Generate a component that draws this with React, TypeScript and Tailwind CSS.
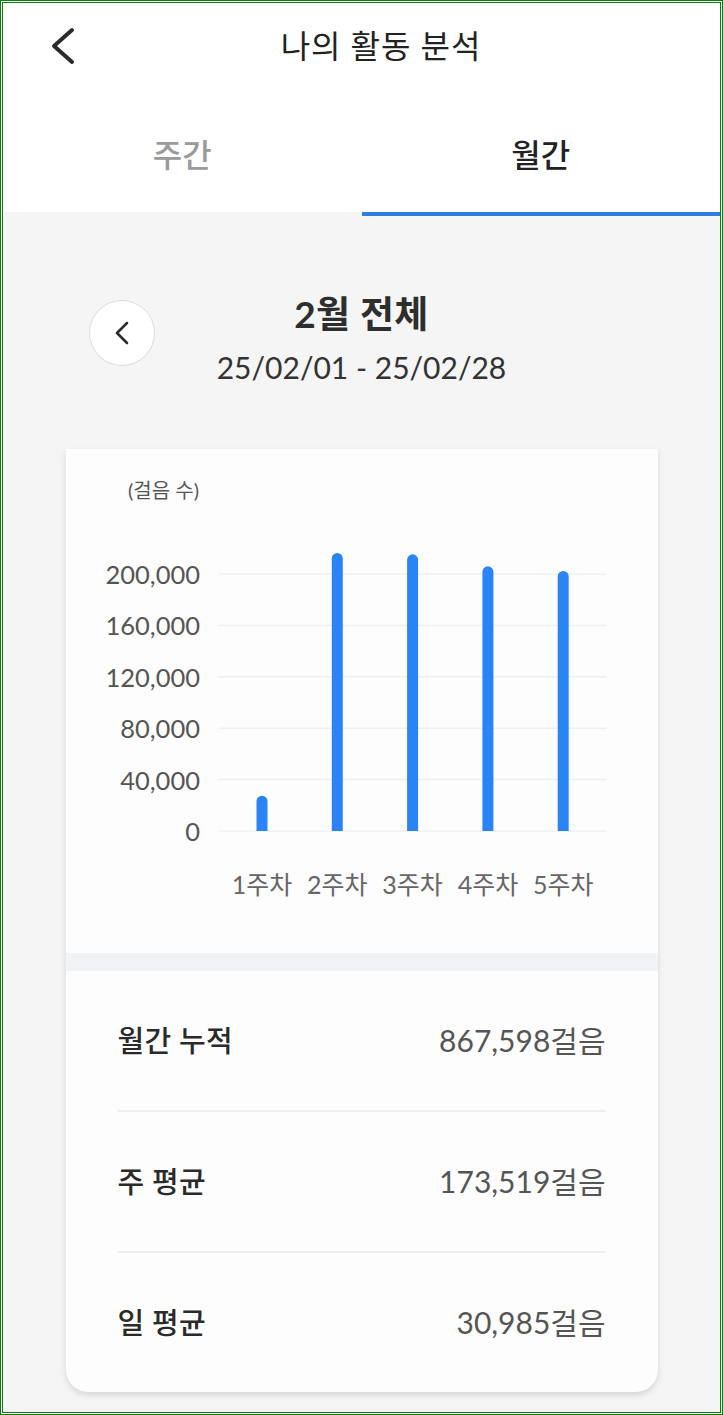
import { useState } from 'react';

const weeks = [
  { label: '1주차', steps: 27500 },
  { label: '2주차', steps: 216400 },
  { label: '3주차', steps: 215300 },
  { label: '4주차', steps: 206000 },
  { label: '5주차', steps: 202398 },
];

const ticks = [0, 40000, 80000, 120000, 160000, 200000];

const stats = [
  { label: '월간 누적', value: '867,598걸음' },
  { label: '주 평균', value: '173,519걸음' },
  { label: '일 평균', value: '30,985걸음' },
];

const Chevron = ({ className }: { className?: string }) => (
  <svg viewBox="0 0 26 38" className={className} fill="none">
    <path
      d="M22 3 L4 19 L22 35"
      stroke="#2b2b2b"
      strokeWidth={4}
      strokeLinecap="round"
      strokeLinejoin="round"
    />
  </svg>
);

const StepChart = () => {
  const base = 382;
  const step = 51.4;
  const scale = 257 / 200000;
  return (
    <svg width={592} height={504} className="block">
      <text x={62} y={41} fontSize={20} fill="#555" dominantBaseline="central">
        (걸음 수)
      </text>
      {ticks.map((t, i) => {
        const y = base - i * step;
        return (
          <g key={t}>
            <line x1={153} x2={540} y1={y} y2={y} stroke="#eef0f4" strokeWidth={1.5} />
            <text
              x={134}
              y={y}
              textAnchor="end"
              dominantBaseline="central"
              fontSize={25.5}
              fill="#555"
            >
              {t.toLocaleString('en-US')}
            </text>
          </g>
        );
      })}
      {weeks.map((w, i) => {
        const cx = 196 + i * 75.3;
        const top = base - w.steps * scale;
        return (
          <g key={w.label}>
            <path
              d={`M${cx - 5.5} ${base} V${top + 5.5} A5.5 5.5 0 0 1 ${cx + 5.5} ${top + 5.5} V${base} Z`}
              fill="#2b84f5"
            />
            <text
              x={cx}
              y={435}
              textAnchor="middle"
              dominantBaseline="central"
              fontSize={25}
              fill="#666"
            >
              {w.label}
            </text>
          </g>
        );
      })}
    </svg>
  );
};

const App = () => {
  const [tab, setTab] = useState<'week' | 'month'>('month');

  return (
    <div className="w-[723px] h-[1415px] border border-[#0b7d0b] p-px bg-white font-['Lato','Noto_Sans_CJK_KR',sans-serif]">
      <div className="h-full border border-[#0b7d0b] bg-[#f5f5f5] flex flex-col overflow-hidden">
        {/* header */}
        <div className="h-[86px] bg-white flex items-center shrink-0">
          <button className="ml-[45px] w-[30px] h-[40px] flex items-center justify-center">
            <Chevron className="w-[26px] h-[38px]" />
          </button>
          <div className="flex-1 text-center pr-[40px] pl-[4px] text-[32px] text-[#222] tracking-[0.03em]">
            나의 활동 분석
          </div>
        </div>

        {/* tabs */}
        <div className="h-[127px] bg-white grid grid-cols-2 shrink-0">
          <div
            onClick={() => setTab('week')}
            className={`flex items-center justify-center pt-[8px] text-[32px] font-medium border-b-4 ${
              tab === 'week'
                ? 'text-[#222] border-[#2f7de1]'
                : 'text-[#9a9a9a] border-[#f5f5f5]'
            }`}
          >
            주간
          </div>
          <div
            onClick={() => setTab('month')}
            className={`flex items-center justify-center pt-[8px] text-[32px] font-medium border-b-4 ${
              tab === 'month'
                ? 'text-[#222] border-[#2f7de1]'
                : 'text-[#9a9a9a] border-[#f5f5f5]'
            }`}
          >
            월간
          </div>
        </div>

        {/* period nav */}
        <div className="h-[233px] grid grid-cols-[1fr_auto_1fr] shrink-0">
          <div className="pl-[86px] pt-[84px]">
            <button className="w-[66px] h-[66px] rounded-full bg-white border border-[#dcdcdc] flex items-center justify-center">
              <svg viewBox="0 0 16 24" className="w-[16px] h-[24px]" fill="none">
                <path
                  d="M13 2 L3 12 L13 22"
                  stroke="#2b2b2b"
                  strokeWidth={2.6}
                  strokeLinecap="round"
                  strokeLinejoin="round"
                />
              </svg>
            </button>
          </div>
          <div className="pt-[76px] flex flex-col items-center">
            <div className="h-[44px] leading-[44px] text-[37px] font-bold text-[#2e2e2e] tracking-[0.01em]">
              2월 전체
            </div>
            <div className="mt-[11px] h-[40px] leading-[40px] text-[30px] text-[#333]">
              25/02/01 - 25/02/28
            </div>
          </div>
          <div />
        </div>

        {/* card */}
        <div className="w-[592px] mx-auto bg-[#fdfdfd] rounded-b-[22px] shadow-[0_3px_6px_rgba(0,0,0,0.13)] shrink-0">
          <StepChart />
          <div className="h-[18px] bg-[#f2f3f6]" />
          {stats.map((s, i) => (
            <div key={s.label}>
              {i > 0 && <div className="mx-[52px] h-[2px] bg-[#efefef]" />}
              <div className="h-[139px] px-[52px] flex items-center justify-between">
                <div className="text-[29px] font-medium text-[#2a2a2a] tracking-[0.01em]">{s.label}</div>
                <div className="text-[30px] text-[#555]">{s.value}</div>
              </div>
            </div>
          ))}
        </div>
      </div>
    </div>
  );
};

export default App;
